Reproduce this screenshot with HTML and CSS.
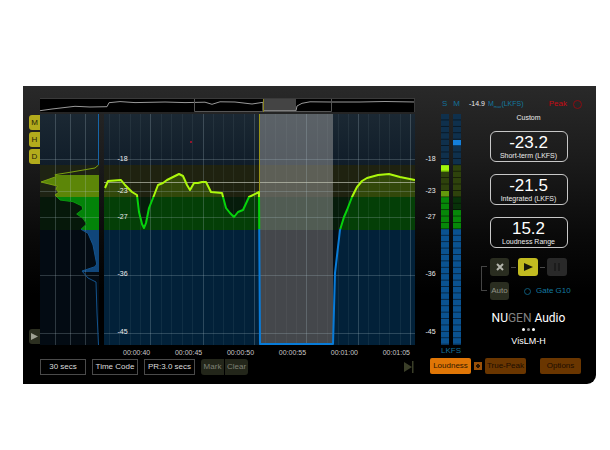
FILE: index.html
```html
<!DOCTYPE html>
<html lang="en">
<head>
  <meta charset="UTF-8">
  <title>NUGEN Audio VisLM-H</title>
  <link rel="stylesheet" href="styles.css">
</head>
<body>
  <div class="panel">
    <div class="tabs">
      <button type="button" class="tab">M</button>
      <button type="button" class="tab">H</button>
      <button type="button" class="tab">D</button>
      <button type="button" class="tab tab-play" aria-label="Expand">
        <svg width="7" height="7" viewBox="0 0 7 7"><path d="M0 0L7 3.5L0 7Z" fill="#a0a294"/></svg>
      </button>
    </div>

    <div class="main">
      <svg class="overview" viewBox="0 0 375 14" preserveAspectRatio="none">
        <rect width="375" height="14" fill="#000"/>
        <rect x="223" width="33" height="14" fill="#444"/>
        <path d="M0 12.7L12 11L35 8.3L50 9L67 8.7L69 4.7L80 3.6L95 4.6L125 4L145 4.6L165 4.2L172 6.3L180 3.8L195 4L212 6L223 4.3V12.8H256L257 8L262 5.3L270 3.8L290 4H320L345 3.5L375 4" fill="none" stroke="#999"/>
        <path d="M154.5 0.5H291.5V13.5H154.5Z" fill="none" stroke="#555"/>
        <path d="M223.5 0V14" stroke="#8a8420"/>
        <path d="M0 .5H375M374.5 0V14" stroke="#3a3a3a" fill="none"/>
      </svg>

      <div class="plots">
        <svg class="histogram" viewBox="0 0 59 231" preserveAspectRatio="none">
          <defs>
            <clipPath id="histRange"><rect y="61" width="59" height="97"/></clipPath>
            <clipPath id="histShape">
              <path d="M59 52L55 54L30 58.3L15 60.7L16 62.7L1 68L17.3 72L16 75.3L18.7 78.3L15 81L20 86L33 87.7L42 92L42.7 95.3L36.7 100L43 104.3L46.7 110L41 115.3L48 119.3L53 131L56.7 150L55 152.7L42 157L48 164L56 168L57 199L59 230Z"/>
            </clipPath>
            <linearGradient id="levels" gradientUnits="userSpaceOnUse" x1="0" y1="0" x2="0" y2="231">
              <stop offset="0" stop-color="#1565a8"/>
              <stop offset=".222" stop-color="#1565a8"/>
              <stop offset=".222" stop-color="#7a9f10"/>
              <stop offset=".36" stop-color="#7a9f10"/>
              <stop offset=".36" stop-color="#0a960f"/>
              <stop offset=".5" stop-color="#0a960f"/>
              <stop offset=".5" stop-color="#12528c"/>
              <stop offset="1" stop-color="#12528c"/>
            </linearGradient>
            <linearGradient id="sky" x1="0" y1="0" x2="0" y2="1">
              <stop offset="0" stop-color="#1b2833"/>
              <stop offset="1" stop-color="#101d29"/>
            </linearGradient>
          </defs>
          <rect width="59" height="51" fill="url(#sky)"/>
          <rect y="51" width="59" height="32" fill="#1e2313"/>
          <rect y="83" width="59" height="33" fill="#06180a"/>
          <rect y="116" width="59" height="115" fill="#030b13"/>
          <g clip-path="url(#histRange)">
            <g clip-path="url(#histShape)">
              <rect y="51" width="59" height="32" fill="#5c8608"/>
              <rect y="83" width="59" height="33" fill="#038309"/>
              <rect y="116" width="59" height="45" fill="#10467a"/>
            </g>
          </g>
          <path class="grid" d="M15.5 0V231M30.5 0V231M45.5 0V231M0 45.5H59M0 77.5H59M0 103.5H59M0 161.5H59M0 219.5H59"/>
          <path d="M58.5 0V51L55 54L30 58.3L15 60.7L16 62.7L1 68L17.3 72L16 75.3L18.7 78.3L15 81L20 86L33 87.7L42 92L42.7 95.3L36.7 100L43 104.3L46.7 110L41 115.3L48 119.3L53 131L56.7 150L55 152.7L42 157L48 164L56 168L57 199L58.5 231" fill="none" stroke="url(#levels)"/>
        </svg>

        <div class="history">
          <svg class="graph" viewBox="0 0 311 231" preserveAspectRatio="none">
            <defs>
              <clipPath id="under">
                <path d="M1 74L4 67L17 66L21 71L28 78L33 81L35 98L38 110L40 114L42 109L45 94L49 84L54 71L59 69L63 66L69 63L75 60L79 62L83 71L86 76L90 69L94 69L98 68L102 68L107 78L118 79L122 94L126 99L130 103L134 98L139 96L145 83L155 78V231H229L231 159L234 133L236 116L240 103L243 96L248 83L253 73L258 67L263 64L274 61L285 60L296 63L311 66V231H0V76Z"/>
              </clipPath>
              <linearGradient id="trace" gradientUnits="userSpaceOnUse" x1="0" y1="0" x2="0" y2="231">
                <stop offset=".36" stop-color="#acf80c"/>
                <stop offset=".36" stop-color="#06d20b"/>
                <stop offset=".5" stop-color="#06d20b"/>
                <stop offset=".5" stop-color="#087bd8"/>
              </linearGradient>
            </defs>
            <rect width="311" height="51" fill="url(#sky)"/>
            <rect y="51" width="311" height="32" fill="#1f2210"/>
            <rect y="83" width="311" height="33" fill="#061c0b"/>
            <rect y="116" width="311" height="115" fill="#030d16"/>
            <g clip-path="url(#under)">
              <rect y="51" width="311" height="32" fill="#32480a"/>
              <rect y="83" width="311" height="33" fill="#043f07"/>
              <rect y="116" width="311" height="115" fill="#022139"/>
            </g>
            <path class="grid grid-minor" d="M5.5 0V231M15.5 0V231M26.5 0V231M36.5 0V231M57.5 0V231M67.5 0V231M78.5 0V231M88.5 0V231M109.5 0V231M119.5 0V231M129.5 0V231M140.5 0V231M161.5 0V231M171.5 0V231M182.5 0V231M192.5 0V231M213.5 0V231M223.5 0V231M234.5 0V231M244.5 0V231M264.5 0V231M275.5 0V231M285.5 0V231M296.5 0V231"/>
            <rect x="155" width="74" height="116" fill="#9b9b9b" opacity=".5"/>
            <rect x="155" y="116" width="74" height="115" fill="#868180" opacity=".5"/>
            <path class="grid" d="M46.5 0V231M99.5 0V231M150.5 0V231M202.5 0V231M254.5 0V231M306.5 0V231M0 45.5H311M0 77.5H311M0 103.5H311M0 161.5H311M0 219.5H311"/>
            <path d="M0 68.5H311" stroke="#c6c9b9" opacity=".65"/>
            <path d="M155.5 0V78" stroke="#9a9418"/>
            <path class="trace" d="M1 74L4 67L17 66L21 71L28 78L33 81L35 98L38 110L40 114L42 109L45 94L49 84L54 71L59 69L63 66L69 63L75 60L79 62L83 71L86 76L90 69L94 69L98 68L102 68L107 78L118 79L122 94L126 99L130 103L134 98L139 96L145 83L155 78L156 230H229L231 159L234 133L236 116L240 103L243 96L248 83L253 73L258 67L263 64L274 61L285 60L296 63L311 66" stroke="url(#trace)"/>
            <circle cx="87" cy="28" r="1" fill="#c0102c"/>
          </svg>
          <div class="scale scale-inner">
            <span>-18</span><span>-23</span><span>-27</span><span>-36</span><span>-45</span>
          </div>
        </div>
      </div>

      <div class="times">
        <span>00:00:40</span><span>00:00:45</span><span>00:00:50</span><span>00:00:55</span><span>00:01:00</span><span>00:01:05</span>
      </div>

      <div class="toolbar">
        <button type="button" class="outline">30 secs</button>
        <button type="button" class="outline">Time Code</button>
        <button type="button" class="outline outline-wide">PR:3.0 secs</button>
        <div class="pair">
          <button type="button" class="dim">Mark</button>
          <button type="button" class="dim">Clear</button>
        </div>
        <button type="button" class="skip" aria-label="Skip to end">
          <svg width="10" height="12" viewBox="0 0 10 12"><path d="M0 1L8 6L0 11ZM8 0H9.5V12H8Z" fill="#3a3e28"/></svg>
        </button>
      </div>
    </div>

    <div class="side">
      <div class="readings">
        <div class="scale">
          <span>-18</span><span>-23</span><span>-27</span><span>-36</span><span>-45</span>
        </div>

        <div class="meters">
          <div class="meter-names"><span>S</span><span>M</span></div>
          <div class="meter-bars">
            <div class="meter meter-s"></div>
            <div class="meter meter-m"></div>
          </div>
          <div class="unit">LKFS</div>
        </div>

        <div class="info">
          <div class="peak-row">
            <span class="max-value">-14.9</span>
            <span class="blue">M<sub>max</sub>(LKFS)</span>
            <span class="peak">Peak</span>
            <span class="peak-light"></span>
          </div>
          <div class="preset">Custom</div>
          <div class="boxes">
            <div class="box"><b>-23.2</b><span>Short-term (LKFS)</span></div>
            <div class="box"><b>-21.5</b><span>Integrated (LKFS)</span></div>
            <div class="box"><b>15.2</b><span>Loudness Range</span></div>
          </div>
          <div class="transport">
            <div class="bracket"></div>
            <div class="controls">
              <button type="button" class="key" aria-label="Reset">
                <svg width="8" height="8" viewBox="0 0 8 8"><path d="M1 1L7 7M7 1L1 7" stroke="#b4b5ac" stroke-width="2"/></svg>
              </button>
              <i class="dash"></i>
              <button type="button" class="key key-play" aria-label="Play">
                <svg width="9" height="8" viewBox="0 0 9 8"><path d="M0 0L9 4L0 8Z" fill="#17180a"/></svg>
              </button>
              <i class="dash"></i>
              <button type="button" class="key key-pause" aria-label="Pause">
                <svg width="8" height="8" viewBox="0 0 8 8"><path d="M1 0H3V8H1ZM5 0H7V8H5Z" fill="#1c1c1c"/></svg>
              </button>
              <button type="button" class="key key-auto">Auto</button>
              <div class="gate"><i class="gate-light"></i>Gate G10</div>
            </div>
          </div>
          <div class="brand">NU<span>GEN</span> Audio</div>
          <div class="dots"><i></i><i></i><i></i></div>
          <div class="product">VisLM-H</div>
        </div>
      </div>

      <div class="modes">
        <button type="button" class="mode mode-on">Loudness</button>
        <button type="button" class="plus" aria-label="Link">
          <svg width="4" height="4" viewBox="0 0 4 4"><path d="M2 0V4M0 2H4" stroke="#2a1400" stroke-width="2"/></svg>
        </button>
        <button type="button" class="mode">True-Peak</button>
        <button type="button" class="mode mode-options">Options</button>
      </div>
    </div>
  </div>
</body>
</html>
```
FILE: styles.css
```css
* {
  box-sizing: border-box;
}
body {
  margin: 0;
  padding: 86px 14px 0 23px;
  background: #fff;
  color: #ececec;
  font: 8px/10px "Liberation Sans", Arial, sans-serif;
}
button {
  display: flex;
  align-items: center;
  justify-content: center;
  margin: 0;
  padding: 0;
  border: none;
  font: inherit;
  cursor: pointer;
}
svg {
  display: block;
}

.panel {
  display: flex;
  padding: 12px 0 9px;
  border-radius: 0 0 9px 0;
  background: linear-gradient(#292929, #1b1b1b 25%, #0a0a0a 50%, #000 70%);
}

/* left tabs */
.tabs {
  display: flex;
  flex-direction: column;
  gap: 2px;
  width: 17px;
  padding: 17px 0 31px 6px;
}
.tab {
  height: 15px;
  border-radius: 3px 0 0 3px;
  background: #b3ab1c;
  color: #25240a;
}
.tab-play {
  margin-top: auto;
  background: #2c2f20;
}

/* overview and graphs */
.main {
  flex: 1;
  min-width: 0;
}
.overview {
  width: 100%;
  height: 14px;
}
.plots {
  display: flex;
  gap: 5px;
  height: 231px;
  margin-top: 2px;
}
.histogram {
  width: 59px;
  height: 100%;
}
.history {
  position: relative;
  flex: 1;
}
.graph {
  width: 100%;
  height: 100%;
}
.grid {
  fill: none;
  stroke: #b4c8d2;
  opacity: .24;
}
.grid-minor {
  opacity: .08;
}
.trace {
  fill: none;
  stroke-width: 2;
  stroke-linejoin: round;
}

.scale {
  display: grid;
  grid-template-rows: 7fr 5fr 4fr 9fr 9fr 2fr;
  align-items: end;
  justify-items: center;
  width: 26px;
  height: 231px;
  margin-top: 16px;
  padding-left: 5px;
  font-size: 7px;
}
.scale span {
  margin-bottom: -5px;
}
.scale-inner {
  position: absolute;
  top: 0;
  left: 3px;
  margin: 0;
}

.times {
  display: flex;
  justify-content: space-between;
  padding: 3px 5px 0 83px;
  color: #c8c8c8;
  font-size: 7px;
}

.toolbar {
  display: flex;
  gap: 6px;
  margin-top: 1px;
}
.outline {
  width: 46px;
  height: 16px;
  border: 1px solid #4a4a4a;
  background: #000;
  color: #dcdcdc;
}
.outline-wide {
  width: 51px;
}
.pair {
  display: flex;
  gap: 1px;
}
.dim {
  width: 23px;
  height: 16px;
  background: #23261a;
  color: #7e8075;
}
.dim:first-child {
  border-radius: 3px 0 0 3px;
}
.dim:last-child {
  border-radius: 0 3px 3px 0;
}
.skip {
  margin: 0 1px 0 auto;
  background: none;
}

/* meters and readouts */
.side {
  width: 181px;
}
.readings {
  display: flex;
}
.meters {
  width: 20px;
  color: #13709a;
}
.meter-names {
  display: flex;
  justify-content: space-between;
  height: 16px;
  padding: 1px 1px 0 1px;
}
.meter-bars {
  display: flex;
  justify-content: space-between;
  height: 231px;
}
.meter {
  --step: calc(100% / 36);
  width: 8px;
}
.meter::after {
  content: '';
  display: block;
  height: 100%;
  background: linear-gradient(transparent 84%, rgba(0, 0, 0, .55) 84%) 0 0 / 100% calc(100% / 36);
}
.meter-s {
  background: linear-gradient(
    #0f304c calc(8 * var(--step)),
    #a0f80c 0 calc(9 * var(--step)),
    #2e420c 0 calc(12 * var(--step)),
    #64990c 0 calc(13 * var(--step)),
    #078809 0 calc(18 * var(--step)),
    #0a5290 0);
}
.meter-m {
  background: linear-gradient(
    #0f304c calc(4 * var(--step)),
    #1480dc 0 calc(5 * var(--step)),
    #0f304c 0 calc(8 * var(--step)),
    #2e420c 0 calc(13 * var(--step)),
    #083209 0 calc(15 * var(--step)),
    #078809 0 calc(18 * var(--step)),
    #0a5290 0);
}
.unit {
  padding-top: 1px;
  text-align: center;
}

.info {
  flex: 1;
  text-align: center;
}
.peak-row {
  display: flex;
  align-items: center;
  height: 12px;
  padding: 0 14px 0 8px;
  font-size: 7px;
}
.blue {
  margin-left: 3px;
  color: #137aa0;
}
.blue sub {
  font-size: 4px;
  line-height: 0;
}
.peak {
  margin-left: auto;
  color: #c80a14;
  font-size: 8px;
}
.peak-light {
  width: 9px;
  height: 9px;
  margin-left: 6px;
  border: 1px solid #8a0c12;
  border-radius: 50%;
}
.preset {
  margin-top: 3px;
  font-size: 7px;
}
.boxes {
  display: flex;
  flex-direction: column;
  align-items: center;
  gap: 12px;
  margin-top: 8px;
}
.box {
  display: flex;
  flex-direction: column;
  width: 78px;
  height: 31px;
  padding-top: 2px;
  border: 1px solid #c8c8c8;
  border-radius: 6px;
  font-size: 7px;
}
.box b {
  color: #fff;
  font-size: 17px;
  font-weight: normal;
  line-height: 18px;
}
.box span {
  line-height: 7px;
}

.transport {
  display: flex;
  gap: 3px;
  margin: 10px 29px 0 20px;
}
.bracket {
  width: 6px;
  height: 25px;
  margin-top: 8px;
  border: 1px solid #444;
  border-right: none;
}
.controls {
  display: grid;
  grid-template-columns: 19px 5px 20px 5px 20px;
  column-gap: 2px;
  row-gap: 6px;
  align-items: center;
}
.key {
  height: 18px;
  border-radius: 3px;
  background: #2a2d20;
}
.key-play {
  background: #c2bb20;
}
.key-pause {
  background: #292929;
}
.key-auto {
  color: #909286;
}
.dash {
  height: 1px;
  background: #4a4a4a;
}
.gate {
  display: flex;
  grid-column: 3 / -1;
  align-items: center;
  gap: 5px;
  padding-left: 6px;
  color: #137aa0;
  white-space: nowrap;
}
.gate-light {
  flex: none;
  width: 7px;
  height: 7px;
  border: 1px solid #0e5a78;
  border-radius: 50%;
}

.brand {
  margin-top: 11px;
  color: #fff;
  font-family: Roboto, "Liberation Sans", sans-serif;
  font-size: 12px;
  line-height: 14px;
}
.brand span {
  color: #808080;
}
.dots {
  display: flex;
  justify-content: center;
  gap: 2px;
  margin-top: 3px;
}
.dots i {
  width: 3px;
  height: 3px;
  border-radius: 50%;
  background: #fff;
}
.dots i:nth-child(2) {
  background: #888;
}
.product {
  margin-top: 5px;
  color: #fff;
  font-size: 9px;
}

.modes {
  display: flex;
  align-items: center;
  gap: 3px;
  margin-top: 2px;
  padding: 0 15px;
}
.mode {
  width: 41px;
  height: 16px;
  border-radius: 2px;
  background: #6a3600;
  color: #1c0d00;
}
.mode-on {
  background: #e07606;
  color: #301800;
}
.mode-options {
  margin-left: auto;
}
.plus {
  width: 8px;
  height: 8px;
  background: #9a5008;
}
```
